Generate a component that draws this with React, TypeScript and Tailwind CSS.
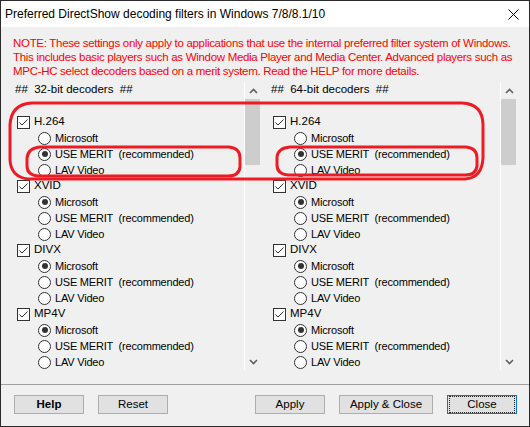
import React from "react";

function Check({ label }: { label: string }) {
  return (
    <div className="h-4 flex items-center pl-[10px]">
      <span className="w-[13px] h-[13px] border border-[#333333] bg-white flex items-center justify-center shrink-0">
        <svg width="11" height="11" viewBox="0 0 11 11">
          <path d="M1.5 5.5 L4 8 L9.5 2.5" fill="none" stroke="#333333" strokeWidth="1" />
        </svg>
      </span>
      <span className="ml-[4px] whitespace-pre">{label}</span>
    </div>
  );
}

function Radio({ label, sel }: { label: string; sel?: boolean }) {
  return (
    <div className="h-4 flex items-center pl-[31px]">
      <span className="w-[13px] h-[13px] rounded-full border border-[#333333] bg-white flex items-center justify-center shrink-0">
        {sel && <span className="w-[6px] h-[6px] rounded-full bg-[#333333]" />}
      </span>
      <span className="ml-[4px] whitespace-pre text-[11px] tracking-[-0.2px]">{label}</span>
    </div>
  );
}

function Group({ name, sel }: { name: string; sel: number }) {
  return (
    <>
      <Check label={name} />
      <Radio label="Microsoft" sel={sel === 0} />
      <Radio label="USE MERIT  (recommended)" sel={sel === 1} />
      <Radio label="LAV Video" sel={sel === 2} />
    </>
  );
}

function ScrollBar() {
  return (
    <div className="w-[17px] border-l border-white flex flex-col shrink-0">
      <div className="h-[17px] flex items-center justify-center">
        <svg width="9" height="6" viewBox="0 0 9 6">
          <path d="M1 5 L4.5 1.5 L8 5" fill="none" stroke="#606060" strokeWidth="1.6" />
        </svg>
      </div>
      <div className="h-[66px] w-[15px] bg-[#cdcdcd]" />
      <div className="flex-1" />
      <div className="h-[17px] flex items-center justify-center">
        <svg width="9" height="6" viewBox="0 0 9 6">
          <path d="M1 1 L4.5 4.5 L8 1" fill="none" stroke="#606060" strokeWidth="1.6" />
        </svg>
      </div>
    </div>
  );
}

function Panel({ bits }: { bits: string }) {
  return (
    <div className="flex h-[288px] w-[254px] shrink-0">
      <div className="w-[237px] overflow-hidden flex flex-col">
        <div className="h-4 flex items-center pl-[8px] whitespace-pre shrink-0">{`##  ${bits}-bit decoders  ##`}</div>
        <div className="h-4 shrink-0" />
        <Group name="H.264" sel={1} />
        <Group name="XVID" sel={0} />
        <Group name="DIVX" sel={0} />
        <Group name="MP4V" sel={0} />
      </div>
      <ScrollBar />
    </div>
  );
}

function Btn({ children, w, bold, focus }: { children: React.ReactNode; w: string; bold?: boolean; focus?: boolean }) {
  return (
    <div
      className={`${w} h-[19px] flex items-center justify-center bg-[#e1e1e1] ${
        focus ? "border border-[#0078d7]" : "border border-[#adadad]"
      } ${bold ? "font-bold" : ""}`}
    >
      {focus ? (
        <div className="w-full h-full m-[1px] border border-dotted border-[#222] flex items-center justify-center">
          {children}
        </div>
      ) : (
        children
      )}
    </div>
  );
}

export default function App() {
  return (
    <div className="relative w-[530px] h-[427px] border border-[#2b2b2b] bg-[#f0f0f0] text-[11.5px] text-black font-['Liberation_Sans',Arial,sans-serif] flex flex-col overflow-hidden">
      <div className="h-[26px] shrink-0 bg-white flex items-center justify-between pl-[4px] pr-[10px] whitespace-nowrap">
        <span className="text-[12px]">Preferred DirectShow decoding filters in Windows 7/8/8.1/10</span>
        <svg width="11" height="11" viewBox="0 0 11 11">
          <path d="M0.5 0.5 L10.5 10.5 M10.5 0.5 L0.5 10.5" stroke="#000" strokeWidth="1" />
        </svg>
      </div>
      <div className="pt-[9px] pl-[12px] pr-[4px] text-[#ff0000] leading-[14px] whitespace-nowrap tracking-[-0.3px] shrink-0">
        <div>NOTE: These settings only apply to applications that use the internal preferred filter system of Windows.</div>
        <div>This includes basic players such as Window Media Player and Media Center. Advanced players such as</div>
        <div>MPC-HC select decoders based on a merit system. Read the HELP for more details.</div>
      </div>
      <div className="flex gap-[2px] pl-[6px] mt-[4px] shrink-0">
        <Panel bits="32" />
        <Panel bits="64" />
      </div>
      <div className="mt-[14px] h-px bg-[#a0a0a0] shrink-0" />
      <div className="flex justify-between pl-[13px] pr-[12px] mt-[10px] shrink-0">
        <div className="flex gap-[14px]">
          <Btn w="w-[70px]" bold>Help</Btn>
          <Btn w="w-[70px]">Reset</Btn>
        </div>
        <div className="flex gap-[14px]">
          <Btn w="w-[70px]">Apply</Btn>
          <Btn w="w-[94px]">Apply &amp; Close</Btn>
          <Btn w="w-[70px]" focus>Close</Btn>
        </div>
      </div>
      <svg className="absolute left-[-1px] top-[-1px] pointer-events-none" width="530" height="427" viewBox="0 0 530 427">
        <g fill="none" stroke="#ed1c24" strokeWidth="3" strokeLinejoin="round" strokeLinecap="round">
          <path d="M32 103 L462 103 Q483 104 483 125 L483 158 Q482 178 465 179 L28 179 Q11 177 10 160 L10 125 Q11 104 32 103 Z" />
          <path d="M40 147 L229 147 Q240 148 240 158 L240 167 Q239 176 228 176 L38 176 Q27 175 27 166 L27 158 Q28 148 40 147 Z" />
          <path d="M290 147 L466 147 Q477 148 477 158 L477 166 Q476 175 465 175 L288 175 Q277 174 277 165 L277 157 Q278 148 290 147 Z" />
        </g>
      </svg>
    </div>
  );
}
